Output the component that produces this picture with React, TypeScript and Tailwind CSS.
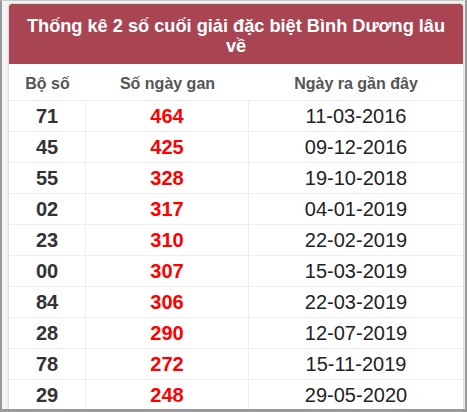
const rows = [
  ["71", "464", "11-03-2016"],
  ["45", "425", "09-12-2016"],
  ["55", "328", "19-10-2018"],
  ["02", "317", "04-01-2019"],
  ["23", "310", "22-02-2019"],
  ["00", "307", "15-03-2019"],
  ["84", "306", "22-03-2019"],
  ["28", "290", "12-07-2019"],
  ["78", "272", "15-11-2019"],
  ["29", "248", "29-05-2020"],
];

export default function App() {
  return (
    <div className="h-[412px] w-[467px] overflow-hidden border-x-2 border-b-[3px] border-t border-x-[#9a9a9a] border-b-[#9a9a9a] border-t-[#c8c8c8] bg-[#f4f4f4] pl-[7px] pr-[2px] pt-[3px] font-['Liberation_Sans',Arial,sans-serif]">
      <div className="h-[420px] overflow-hidden rounded-t-[3px] bg-white shadow-[0_0_3px_rgba(0,0,0,0.25)]">
        <div className="flex h-[60px] items-center justify-center bg-[#a94553] px-4 pt-[3px] text-center text-[18.2px] font-bold leading-[20px] text-white">
          Thống kê 2 số cuối giải đặc biệt Bình Dương lâu về
        </div>
        <div className="grid grid-cols-[77px_163px_214px]">
          <div className="flex h-[37px] items-center justify-center border-b border-[#eeeeee] pt-[4px] text-[16px] font-bold text-[#555]">Bộ số</div>
          <div className="flex h-[37px] items-center justify-center border-b border-[#eeeeee] pt-[4px] text-[16px] font-bold text-[#555]">Số ngày gan</div>
          <div className="flex h-[37px] items-center justify-center border-b border-[#eeeeee] pt-[4px] text-[16px] font-bold text-[#555]">Ngày ra gần đây</div>
          {rows.map(([so, gan, ngay]) => (
            <div key={so} className="contents">
              <div className="flex h-[31px] items-center justify-center border-b border-r border-[#eeeeee] text-[20px] font-bold text-[#333]">{so}</div>
              <div className="flex h-[31px] items-center justify-center border-b border-r border-[#eeeeee] text-[20px] font-bold text-[#ff0000]">{gan}</div>
              <div className="flex h-[31px] items-center justify-center border-b border-[#eeeeee] text-[20px] text-[#222]">{ngay}</div>
            </div>
          ))}
        </div>
      </div>
    </div>
  );
}
